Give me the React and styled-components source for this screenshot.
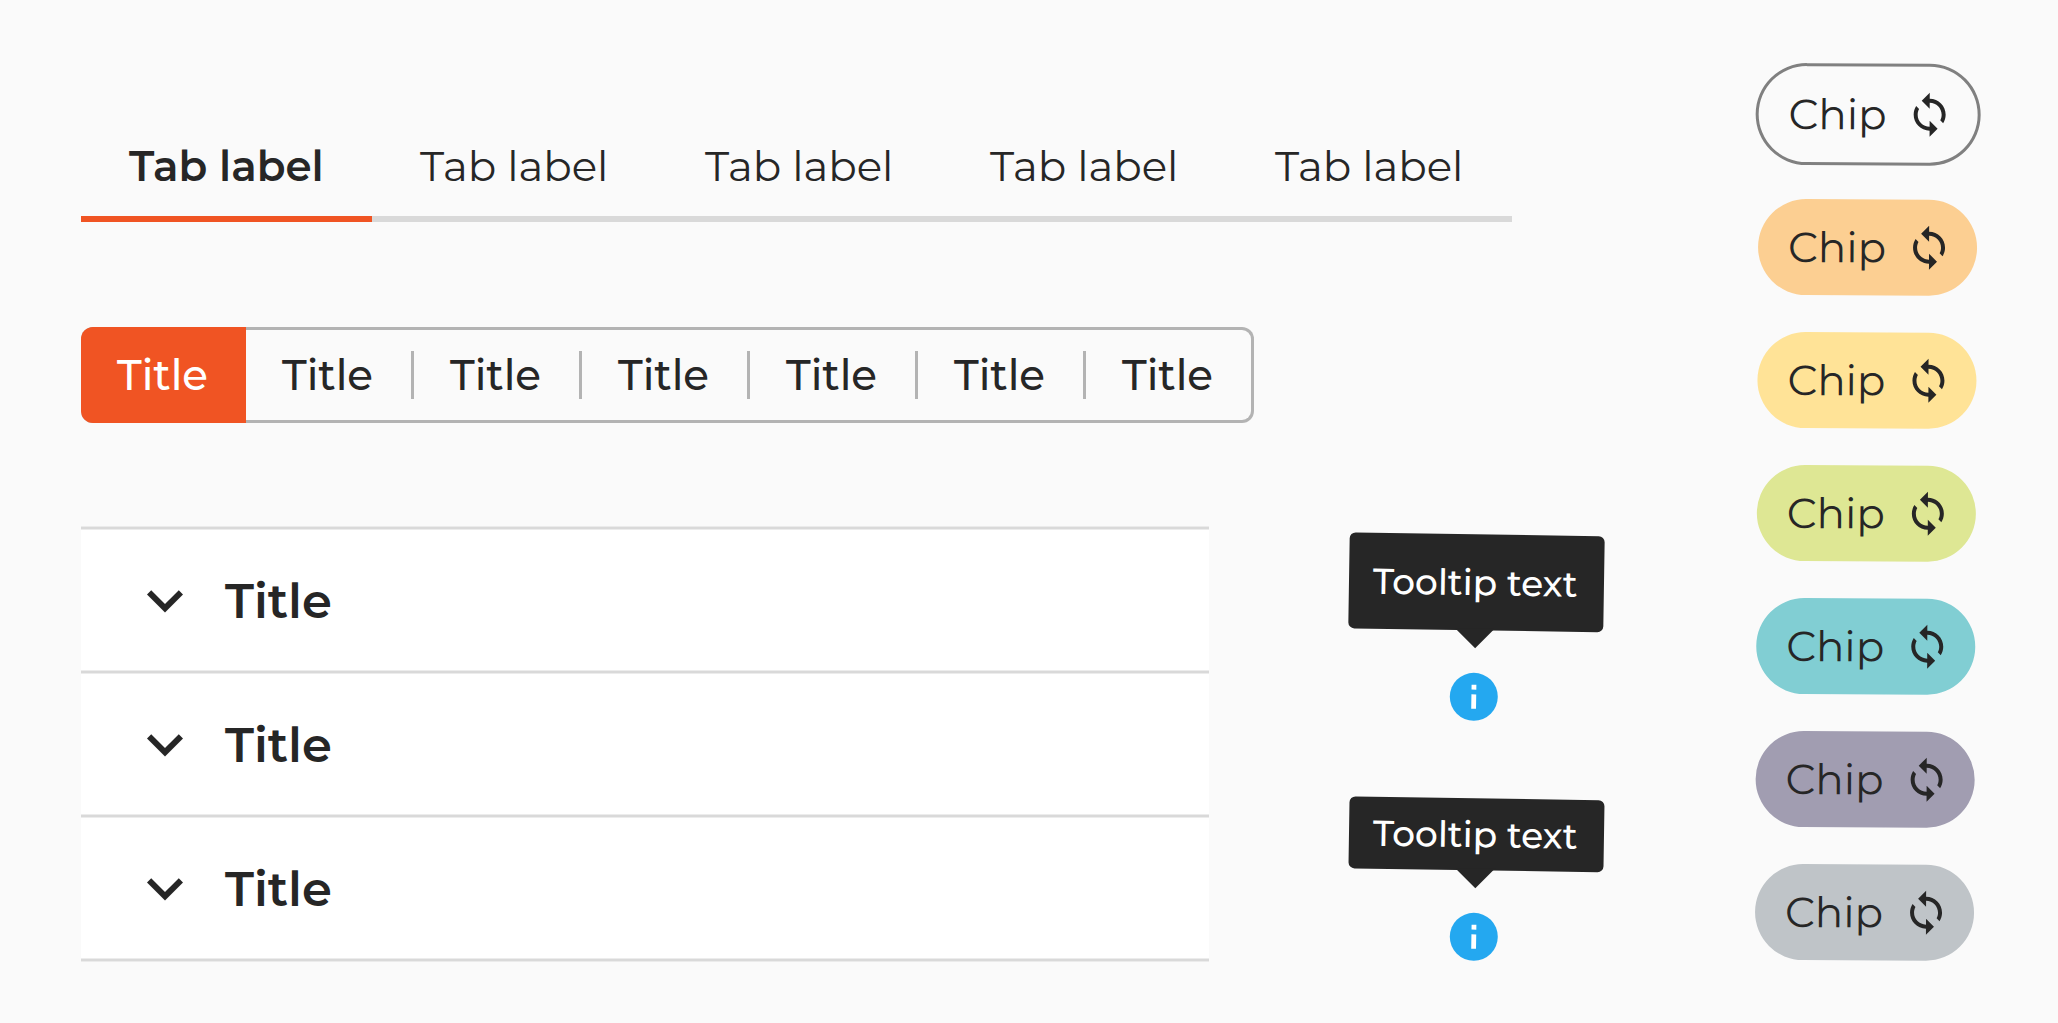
import React from 'react'
import styled, { createGlobalStyle } from 'styled-components';

const GlobalStyle = createGlobalStyle`
    *{
        box-sizing: border-box;
    }

    body{
        margin: 0;
        background: #fafafa;
        color: #262626;
        font-family: Montserrat, Inter, sans-serif;
    }

    button{
        border: none;
        background: none;
        padding: 0;
        margin: 0;
        color: inherit;
        font-family: inherit;
    }
`

const Page = styled.main`
    display: flex;
    align-items: flex-start;
    width: 2058px;
    height: 1023px;
    padding-left: 81px;
    overflow: hidden;
`

const Main = styled.section`
    width: 1268px;
    padding-top: 126px;
`

const Tabs = styled.nav`
    display: flex;
    width: 1431px;
    height: 96px;
`

const Tab = styled.button`
    width: ${props => props.$active ? '291px' : '285px'};
    height: 96px;
    padding: 0 0 11px 48px;
    text-align: left;
    white-space: nowrap;
    border-bottom: 6px solid ${props => props.$active ? '#f05423' : '#d9d9d9'};
    font-size: 42px;
    line-height: 72px;
    font-weight: ${props => props.$active ? 600 : 400};
`

const Segments = styled.div`
    display: flex;
    align-items: center;
    width: 1173px;
    height: 96px;
    margin-top: 105px;
    border: 3px solid #b3b3b3;
    border-left: none;
    border-radius: 12px;
`

const Segment = styled.button`
    flex: none;
    width: ${props => props.$active ? '165px' : '168px'};
    height: ${props => props.$active ? '96px' : '48px'};
    padding-left: 36px;
    text-align: left;
    font-size: 42px;
    line-height: 48px;
    font-weight: 500;
    color: ${props => props.$active ? '#fff' : '#262626'};
    background: ${props => props.$active ? '#f05423' : 'none'};
    border-radius: ${props => props.$active ? '12px 0 0 12px' : '0'};
    border-right: ${props => props.$active ? 'none' : '3px solid #b3b3b3'};

    &:last-child{
        border-right: none;
    }
`

const Accordion = styled.div`
    width: 1128px;
    margin-top: 103px;
    background: #fff;
    border-top: 3px solid #d9d9d9;
    transform: translateY(0.5px);
`

const AccordionRow = styled.div`
    display: flex;
    align-items: center;
    height: 144px;
    padding-left: 48px;
    border-bottom: 3px solid #d9d9d9;
    font-size: 48px;
    font-weight: 600;

    span{
        padding-top: 1px;
    }

    svg{
        width: 72px;
        height: 72px;
        margin-right: 24px;
    }
`

const Tooltips = styled.aside`
    display: flex;
    flex-direction: column;
    align-items: center;
    width: 255px;
    padding-top: 534px;
`

const TooltipItem = styled.div`
    display: flex;
    flex-direction: column;
    align-items: center;
    margin-bottom: 72.4px;

    svg{
        width: 57.6px;
        height: 57.6px;
        margin: 38px 6px 0 0;
    }
`

const Bubble = styled.div`
    position: relative;
    width: 255px;
    height: ${props => props.$small ? '72px' : '96px'};
    padding-left: 24px;
    white-space: nowrap;
    background: #262626;
    border-radius: 6px;
    color: #fff;
    font-size: 36px;
    font-weight: 500;
    line-height: ${props => props.$small ? '72px' : '96px'};
    transform: translateY(0.3px) rotate(0.9deg);

    &::after{
        content: '';
        position: absolute;
        top: 100%;
        left: 107px;
        border: 20px solid transparent;
        border-top-color: #262626;
        border-bottom: none;
        margin-top: -2px;
        transform: rotate(-0.9deg);
    }
`

const Chips = styled.aside`
    display: flex;
    flex-direction: column;
    gap: 37px;
    width: 219px;
    margin-left: 153px;
    padding-top: 66px;
    transform: translateY(0.4px) rotate(0.26deg);
`

const Chip = styled.div`
    display: flex;
    align-items: center;
    justify-content: space-between;
    height: 96px;
    padding: 0 24px 0 30px;
    border-radius: 48px;
    background: ${props => props.$color || 'none'};
    box-shadow: ${props => props.$outlined ? '0 0 0 3px #808080' : 'none'};
    font-size: 42px;
    font-weight: 400;

    svg{
        width: 48px;
        height: 48px;
    }
`

function ChevronIcon() {
    return(
        <svg viewBox="0 0 24 24" fill="currentColor">
            <path d="M16.59 8.59L12 13.17 7.41 8.59 6 10l6 6 6-6z"/>
        </svg>
    )
}

function InfoIcon() {
    return(
        <svg viewBox="0 0 24 24">
            <circle cx="12" cy="12" r="10" fill="#24a8f0"/>
            <path d="M11 7h2v2h-2zM11 11h2v6h-2z" fill="#fff" transform="rotate(.9 12 12)"/>
        </svg>
    )
}

function SyncIcon() {
    return(
        <svg viewBox="0 0 24 24" fill="currentColor">
            <path d="M12 4V1L8 5l4 4V6c3.31 0 6 2.69 6 6 0 1.01-.25 1.97-.7 2.8l1.46 1.46C19.54 15.03 20 13.57 20 12c0-4.42-3.58-8-8-8zm0 14c-3.31 0-6-2.69-6-6 0-1.01.25-1.97.7-2.8L5.24 7.74C4.46 8.97 4 10.43 4 12c0 4.42 3.58 8 8 8v3l4-4-4-4v3z"/>
        </svg>
    )
}

const chipColors = ['', '#fccf92', '#ffe397', '#dee794', '#81ced3', '#a19db1', '#bfc4c8']

export default function App() {
    return(
        <Page>
            <GlobalStyle/>
            <Main>
                <Tabs>
                    {[0, 1, 2, 3, 4].map(i => <Tab key={i} $active={i === 0}>Tab label</Tab>)}
                </Tabs>

                <Segments>
                    {[0, 1, 2, 3, 4, 5, 6].map(i => <Segment key={i} $active={i === 0}>Title</Segment>)}
                </Segments>

                <Accordion>
                    {[0, 1, 2].map(i => (
                        <AccordionRow key={i}>
                            <ChevronIcon/>
                            <span>Title</span>
                        </AccordionRow>
                    ))}
                </Accordion>
            </Main>

            <Tooltips>
                <TooltipItem>
                    <Bubble>Tooltip text</Bubble>
                    <InfoIcon/>
                </TooltipItem>
                <TooltipItem>
                    <Bubble $small>Tooltip text</Bubble>
                    <InfoIcon/>
                </TooltipItem>
            </Tooltips>

            <Chips>
                {chipColors.map((color, i) => (
                    <Chip key={i} $color={color} $outlined={!color}>
                        <span>Chip</span>
                        <SyncIcon/>
                    </Chip>
                ))}
            </Chips>
        </Page>
)}
